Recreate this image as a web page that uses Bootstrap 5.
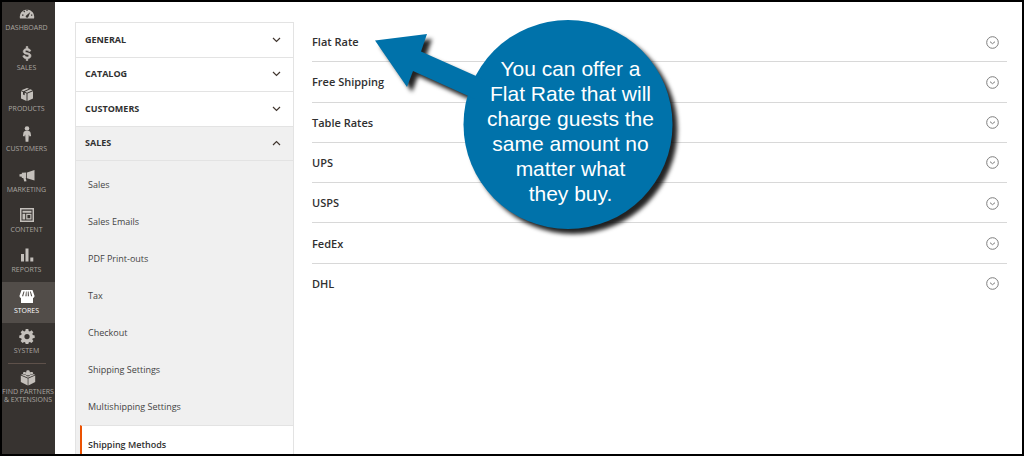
<!DOCTYPE html>
<html lang="en">
<head>
<meta charset="utf-8">
<meta name="viewport" content="width=device-width, initial-scale=1">
<title>Configuration - Shipping Methods</title>
<link href="https://cdn.jsdelivr.net/npm/bootstrap@5.3.0/dist/css/bootstrap.min.css" rel="stylesheet">
<style>
body { font-family: "Open Sans", "Noto Sans", sans-serif; color: #303030; background: #fff; }
.frame { border: 2px solid #000; }
a { color: inherit; text-decoration: none; }
svg { display: block; }

/* dark admin menu */
.admin-menu { width: 53px; background: #373330; color: #aaa6a0; }
.menu-items { display: grid; height: 361px; grid-template-rows: 38px repeat(8, 1fr); }
.menu-items a, .partners { font-size: 7px; line-height: 9px; text-align: center; white-space: nowrap; }
.menu-items a { padding: 0 4px 8px 0; }
.menu-items svg, .partners svg { width: 16px; height: 16px; fill: currentColor; margin-bottom: 2px; }
.menu-items a:not(.active) svg, .partners svg { color: #c4c0bb; }
.menu-rule { margin: 0 9px 0 6px; border-top: 1px solid #5e514a; }
.menu-items .active { background: #524d49; color: #fff; }
.partners { padding: 6px 1px 0 0; line-height: 8px; }

/* configuration tabs */
.config-nav { width: 219px; margin: 20px 0 0 20px; border: 1px solid #e3e3e3; border-bottom: 0; }
.tab-heads { display: grid; height: 138px; grid-template-rows: repeat(4, 1fr); }
.tab-heads button { border: 0; border-bottom: 1px solid #e3e3e3; background: #fff; color: #303030; font-size: 9px; line-height: 14px; font-weight: 700; padding: 0 12px 0 9px; }
.tab-heads .open { background: #f0f0f0; }
.sub-list { background: #f0f0f0; padding: 5px 0 0 4px; }
.sub-list a { display: block; height: 37px; line-height: 38px; font-size: 9px; padding-left: 8px; color: #444; }
.sub-list .current { border-left: 2px solid #eb5202; background: #fff; padding-left: 6px; font-weight: 600; line-height: 38px; color: #303030; border-top: 1px solid #e3e3e3; }
.chev { width: 9px; height: 6px; fill: none; stroke: #41362f; stroke-width: 1.2; }

/* shipping carriers */
.carriers { display: grid; height: 282px; grid-template-rows: repeat(7, 1fr); margin: 20px 15px 0 18px; }
.carriers button { border: 0; border-bottom: 1px solid #d8d8d8; background: none; padding: 1px 8px 0 0; color: #303030; font-size: 11px; line-height: 16px; font-weight: 600; }
.carriers button:last-child { border-bottom-color: transparent; }
.carriers svg { width: 13px; height: 13px; fill: none; stroke: #7d7d7d; }

/* annotation lying over the page */
.callout { left: 373px; top: 18px; width: 310px; height: 224px; }
.callout svg { filter: drop-shadow(5px 5px 2px #000d); }
.callout p { left: 91px; top: 0; width: 209px; height: 209px; padding-top: 13px; font: 21px/25px "Liberation Sans", Arial, sans-serif; color: #fff; }
</style>
</head>
<body>
<div class="frame vh-100 d-flex overflow-hidden position-relative">
  <nav class="admin-menu flex-shrink-0" aria-label="Admin">
    <div class="menu-items">
      <a href="#" class="d-flex flex-column align-items-center justify-content-end"><svg viewBox="0 0 16 16"><path fill-rule="evenodd" d="M1 13.500A7.200 7.200 0 1 1 15 13.500ZM7 12.300a1.400 1.400 0 0 0 2.300-.4L11.300 7 7.200 10.500a1.400 1.400 0 0 0-.2 1.800ZM3 9.500v1.200h1.500V9.500ZM4.300 6.500l1 1 .9-.9-1-1ZM7.400 4.700v1.400h1.200V4.700ZM12 9.500v1.200h1.300V9.500Z"/></svg>DASHBOARD</a>
      <a href="#" class="d-flex flex-column align-items-center justify-content-end"><svg viewBox="0 0 16 16"><path stroke="currentColor" stroke-width=".6" d="M7.200 1.500h1.600v2c1.500.2 2.600 1 3 2.400l-1.900.7c-.3-.9-1-1.300-2-1.300-1 0-1.700.4-1.700 1.100 0 .8.700 1 2.300 1.400 2.100.5 3.500 1.200 3.500 3 0 1.600-1.200 2.700-3.200 2.900V15.500H7.200v-1.800c-1.800-.2-3-1.200-3.400-2.800l2-.6c.3 1.100 1.100 1.700 2.300 1.700 1.100 0 1.800-.4 1.800-1.200s-.7-1.100-2.400-1.500C5.500 8.800 4.200 8.200 4.200 6.500c0-1.500 1.200-2.700 3-3Z"/></svg>SALES</a>
      <a href="#" class="d-flex flex-column align-items-center justify-content-end"><svg viewBox="0 0 16 16"><path d="M8 2l2 .8-5.500 2.400-2.200-.9ZM11.200 3.300l2.500 1L8 6.700 5.800 5.800ZM2 5.300l2 .8v2.300l1.700.8V6.800l1.800.7V15L2 12.600ZM14 5.300v7.300L8.500 15V7.500Z"/></svg>PRODUCTS</a>
      <a href="#" class="d-flex flex-column align-items-center justify-content-end"><svg viewBox="0 0 16 16"><circle cx="8" cy="2.500" r="2.300"/><path d="M6.300 5h3.400c1.200 0 1.700 1 1.900 2l.5 3-1.500.6-.8-2-.4 7.200H6.600l-.4-7.200-.8 2-1.500-.6.500-3c.2-1 .7-2 1.900-2Z"/></svg>CUSTOMERS</a>
      <a href="#" class="d-flex flex-column align-items-center justify-content-end"><svg viewBox="0 0 16 16"><path d="M15.500 3v10.500L8 11.200V5.500ZM7.200 5.600v5.500l-.5 0 .8 3.100-2.200.3-1-3.400H2.800V9.800L.5 9.500V7.300l2.300-.2V5.700Z"/></svg>MARKETING</a>
      <a href="#" class="d-flex flex-column align-items-center justify-content-end"><svg viewBox="0 0 16 16"><path fill-rule="evenodd" d="M1 1h14v14H1ZM2.500 2.500v11h11v-11ZM3.500 3.700h9v2h-9ZM3.500 6.700h2.700v5.800H3.500ZM7.200 6.700h5.300v5.800H7.200ZM8.400 7.900v3.400h2.900V7.900Z"/></svg>CONTENT</a>
      <a href="#" class="d-flex flex-column align-items-center justify-content-end"><svg viewBox="0 0 16 16"><path d="M2 7h3v7.500H2ZM6.500 1.500h3v13h-3ZM11.300 10.500h3v4h-3Z"/></svg>REPORTS</a>
      <a href="#" class="active d-flex flex-column align-items-center justify-content-end" aria-current="page"><svg viewBox="0 0 16 16"><path fill-rule="evenodd" d="M2.500 2h11l2 5.700c0 1.400-.6 2-1.500 2.200V15H2V9.900C1 9.600.5 9 .5 7.700ZM4.500 3.500 3 8.300h1.200l1.300-4.800ZM7 3.500l-.6 4.800h1.200V3.500ZM8.800 3.500v4.800H10l-.4-4.800ZM10.900 3.500l1.200 4.800h1.200l-1.500-4.800Z"/></svg>STORES</a>
      <a href="#" class="d-flex flex-column align-items-center justify-content-end"><svg viewBox="0 0 16 16"><path fill-rule="evenodd" d="M6.700 1h2.600l.4 1.900 1.200.5 1.600-1.100 1.900 1.900-1.100 1.600.5 1.200 1.900.4v2.500l-1.900.4-.5 1.200 1.100 1.600-1.900 1.900-1.600-1.100-1.200.5-.4 1.900H6.700l-.4-1.900-1.200-.5L3.500 15l-1.900-1.900 1.100-1.600-.5-1.200-1.900-.4V7.400L2.200 7l.5-1.200-1.100-1.600 1.900-1.900 1.600 1.100 1.200-.5ZM8 6a2.600 2.600 0 1 0 0 5.200A2.600 2.600 0 0 0 8 6Z"/></svg>SYSTEM</a>
    </div>
    <div class="menu-rule"></div>
    <a href="#" class="partners d-flex flex-column align-items-center"><svg viewBox="0 0 16 16"><path d="M.8 5.500 7.700 8.400V15.500L.8 12ZM15.200 5.500 8.400 8.400V15.500L15.200 12Z"/><path fill-rule="evenodd" d="M1 4.800 3 4V2.800c0-1 3-1 3 0L6.300 2V1c0-1 3.400-1 3.400 0v1l.4.600c.2-.8 3-.8 3 .2V4l2 .8L8 7.700ZM6.300 5v.800c.6.700 2.800.7 3.400 0V5c-.8.600-2.600.6-3.400 0ZM3 3.700c.7.600 2.300.6 3 0v.6c-.7.600-2.300.6-3 0ZM10 3.700c.7.600 2.400.6 3.100 0v.6c-.7.600-2.400.6-3.100 0Z"/></svg><span>FIND PARTNERS<br>&amp; EXTENSIONS</span></a>
  </nav>

  <aside class="config-nav flex-shrink-0">
    <div class="tab-heads">
      <button type="button" class="d-flex align-items-center justify-content-between">GENERAL<svg class="chev" viewBox="0 0 9 6"><path d="M1 1l3.500 3.500L8 1"/></svg></button>
      <button type="button" class="d-flex align-items-center justify-content-between">CATALOG<svg class="chev" viewBox="0 0 9 6"><path d="M1 1l3.500 3.500L8 1"/></svg></button>
      <button type="button" class="d-flex align-items-center justify-content-between">CUSTOMERS<svg class="chev" viewBox="0 0 9 6"><path d="M1 1l3.500 3.500L8 1"/></svg></button>
      <button type="button" class="open d-flex align-items-center justify-content-between" aria-expanded="true">SALES<svg class="chev" viewBox="0 0 9 6"><path d="M1 5l3.500-3.500L8 5"/></svg></button>
    </div>
    <div class="sub-list">
      <a href="#">Sales</a>
      <a href="#">Sales Emails</a>
      <a href="#">PDF Print-outs</a>
      <a href="#">Tax</a>
      <a href="#">Checkout</a>
      <a href="#">Shipping Settings</a>
      <a href="#">Multishipping Settings</a>
      <a href="#" class="current" aria-current="page">Shipping Methods</a>
    </div>
  </aside>

  <main class="carriers flex-grow-1">
    <button type="button" class="d-flex align-items-center justify-content-between">Flat Rate<svg viewBox="0 0 13 13"><circle cx="6.500" cy="6.500" r="5.800"/><path d="M4 5.700l2.500 2 2.500-2"/></svg></button>
    <button type="button" class="d-flex align-items-center justify-content-between">Free Shipping<svg viewBox="0 0 13 13"><circle cx="6.500" cy="6.500" r="5.800"/><path d="M4 5.700l2.500 2 2.500-2"/></svg></button>
    <button type="button" class="d-flex align-items-center justify-content-between">Table Rates<svg viewBox="0 0 13 13"><circle cx="6.500" cy="6.500" r="5.800"/><path d="M4 5.700l2.500 2 2.500-2"/></svg></button>
    <button type="button" class="d-flex align-items-center justify-content-between">UPS<svg viewBox="0 0 13 13"><circle cx="6.500" cy="6.500" r="5.800"/><path d="M4 5.700l2.500 2 2.500-2"/></svg></button>
    <button type="button" class="d-flex align-items-center justify-content-between">USPS<svg viewBox="0 0 13 13"><circle cx="6.500" cy="6.500" r="5.800"/><path d="M4 5.700l2.500 2 2.500-2"/></svg></button>
    <button type="button" class="d-flex align-items-center justify-content-between">FedEx<svg viewBox="0 0 13 13"><circle cx="6.500" cy="6.500" r="5.800"/><path d="M4 5.700l2.500 2 2.500-2"/></svg></button>
    <button type="button" class="d-flex align-items-center justify-content-between">DHL<svg viewBox="0 0 13 13"><circle cx="6.500" cy="6.500" r="5.800"/><path d="M4 5.700l2.500 2 2.500-2"/></svg></button>
  </main>

  <div class="callout position-absolute">
    <svg width="310" height="224" viewBox="0 0 310 224" fill="#0072aa"><circle cx="193" cy="104.500" r="104.500"/><path d="M0 20.500 52 14 46 31.500 110 60 100 79 38 51 32 67Z"/></svg>
    <p class="position-absolute m-0 d-flex align-items-center justify-content-center text-center"><span>You can offer a<br>Flat Rate that will<br>charge guests the<br>same amount no<br>matter what<br>they buy.</span></p>
  </div>
</div>
<script src="https://cdn.jsdelivr.net/npm/bootstrap@5.3.0/dist/js/bootstrap.bundle.min.js"></script>
</body>
</html>
